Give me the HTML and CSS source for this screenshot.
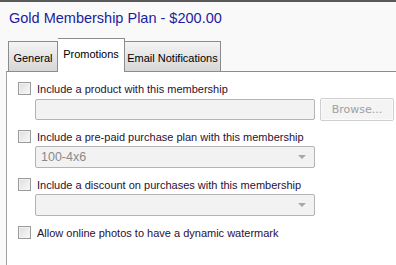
FILE: index.html
```html
<!DOCTYPE html>
<html lang="en">

<head>
    <meta charset="UTF-8">
    <title>Gold Membership Plan</title>
    <link rel="stylesheet" href="styles.css">
</head>

<body>
    <div class="page">
        <h1 class="title">Gold Membership Plan - $200.00</h1>

        <!-- tabs -->
        <div class="tabs">
            <button class="tab tab-general">General</button>
            <button class="tab tab-promo active">Promotions</button>
            <button class="tab tab-email">Email Notifications</button>
        </div>

        <div class="panel">
            <label class="check-row">
                <input type="checkbox">
                <span>Include a product with this membership</span>
            </label>
            <div class="field-row">
                <input class="text-field" type="text" disabled>
                <button class="browse-btn" disabled>Browse...</button>
            </div>

            <label class="check-row">
                <input type="checkbox">
                <span>Include a pre-paid purchase plan with this membership</span>
            </label>
            <div class="field-row">
                <div class="select-field">
                    <span>100-4x6</span>
                    <span class="arrow"></span>
                </div>
            </div>

            <label class="check-row">
                <input type="checkbox">
                <span>Include a discount on purchases with this membership</span>
            </label>
            <div class="field-row">
                <div class="select-field">
                    <span></span>
                    <span class="arrow"></span>
                </div>
            </div>

            <label class="check-row">
                <input type="checkbox">
                <span>Allow online photos to have a dynamic watermark</span>
            </label>
        </div>
    </div>
</body>

</html>
```

FILE: styles.css
```css
/* base */
body {
    margin: 0;
    background-color: #f9f9f9;
    font-family: "Liberation Sans", Arial, sans-serif;
    border-top: 2px solid #5a5a5a;
    height: 263px;
    overflow: hidden;
}

.page {
    padding-left: 6px;
}

.title {
    margin: 0;
    padding: 8px 0 0 3px;
    height: 31px;
    box-sizing: border-box;
    font-size: 14.5px;
    font-weight: normal;
    color: #1c1ca0;
}

/* tabs */
.tabs {
    display: flex;
    align-items: flex-end;
    padding-left: 2px;
    height: 38px;
}

.tab {
    height: 30px;
    padding: 2px 0 0;
    margin: 0;
    font-family: "Liberation Sans", Arial, sans-serif;
    font-size: 11px;
    color: #000;
    background: linear-gradient(#f4f4f4, #d6d6d6);
    border: 1px solid #8c8c8c;
    border-bottom: none;
    border-radius: 0;
    box-sizing: border-box;
}

.tab-general {
    width: 50px;
}

.tab-promo {
    width: 67px;
}

.tab-email {
    width: 96px;
}

.tab.active {
    height: 34px;
    background: #ffffff;
    padding: 0 0 3px;
    margin-bottom: -1px;
}

.tab + .tab {
    border-left: none;
}

/* panel */
.panel {
    background-color: #ffffff;
    border-top: 1px solid #8c8c8c;
    border-left: 1px solid #a0a0a0;
    height: 200px;
    padding: 10px 0 0 11px;
    box-sizing: border-box;
}

.check-row {
    display: flex;
    align-items: center;
    height: 13px;
    font-family: "Liberation Sans", Arial, sans-serif;
    font-size: 11px;
    color: #2b0f33;
}

.check-row input {
    width: 13px;
    height: 13px;
    margin: 0 6px 0 0;
    appearance: none;
    border: 1px solid #9a9a9a;
    background: linear-gradient(135deg, #dcdcdc, #fafafa);
    box-shadow: inset 0 0 0 1px #f2f2f2;
}

.field-row {
    display: flex;
    align-items: center;
    margin: 3px 0 10px 17px;
    height: 22px;
}

.text-field {
    width: 280px;
    height: 21px;
    box-sizing: border-box;
    border: 1px solid #b4b4b4;
    border-radius: 2px;
    background: #f2f2f2;
}

.browse-btn {
    margin-left: 5px;
    width: 74px;
    height: 23px;
    font-family: "DejaVu Sans", sans-serif;
    font-size: 11px;
    color: #a0a0a0;
    background: #f4f4f4;
    border: 1px solid #cfcfcf;
    box-shadow: inset 0 0 0 1px #fbfbfb;
    border-radius: 2px;
}

.select-field {
    display: flex;
    align-items: center;
    justify-content: space-between;
    width: 280px;
    height: 22px;
    box-sizing: border-box;
    padding: 0 8px 0 5px;
    border: 1px solid #b4b4b4;
    border-radius: 2px;
    background: #f2f2f2;
    font-family: "Liberation Sans", Arial, sans-serif;
    font-size: 12.5px;
    color: #8a8a8a;
}

.arrow {
    width: 0;
    height: 0;
    border-left: 4px solid transparent;
    border-right: 4px solid transparent;
    border-top: 4px solid #a8a8a8;
}
```
